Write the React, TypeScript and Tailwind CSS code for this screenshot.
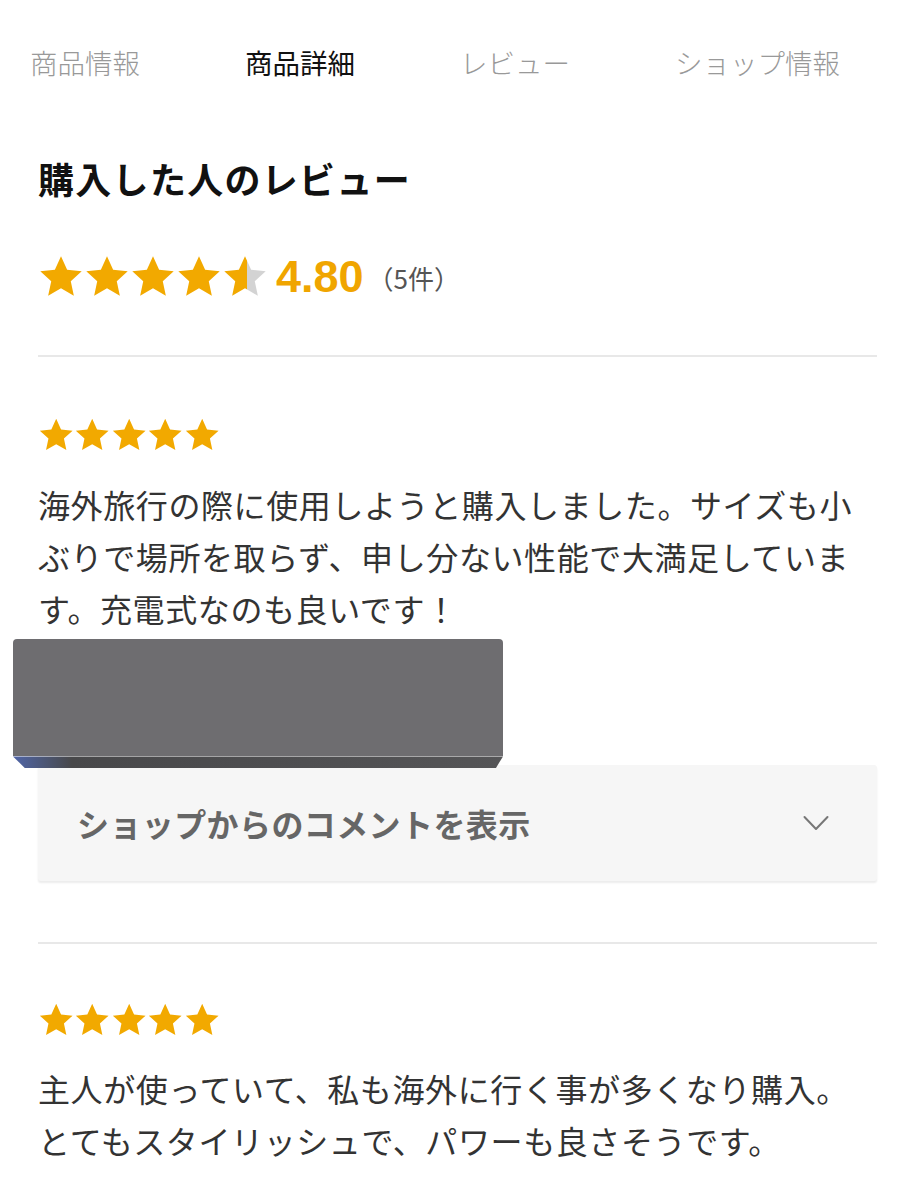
import React from "react";

const STAR = "12,1.2 15.2,8.2 22.8,9 17.1,14.2 18.7,21.8 12,17.9 5.3,21.8 6.9,14.2 1.2,9 8.8,8.2";

function Star({ size, fill = 1, id }: { size: number; fill?: number; id: string }) {
  return (
    <svg width={size} height={size} viewBox="0 0 24 24" className="block">
      <defs>
        <linearGradient id={id} x1="0" x2="1" y1="0" y2="0">
          <stop offset={fill} stopColor="#f2a900" />
          <stop offset={fill} stopColor="#d3d3d3" />
        </linearGradient>
      </defs>
      <polygon points={STAR} fill={`url(#${id})`} />
    </svg>
  );
}

function Stars({ size, rating, prefix }: { size: number; rating: number; prefix: string }) {
  return (
    <div className="flex">
      {[0, 1, 2, 3, 4].map((i) => (
        <Star key={i} size={size} id={`${prefix}${i}`} fill={Math.max(0, Math.min(1, rating - i))} />
      ))}
    </div>
  );
}

export default function App() {
  return (
    <div
      className="w-[915px] h-[1200px] bg-white overflow-hidden"
      style={{ fontFamily: '"Noto Sans CJK JP", "Noto Sans", sans-serif' }}
    >
      <nav className="flex pl-[30px] gap-[105px] pt-[44px] text-[27.5px] leading-[36px] font-light text-[#999999]">
        <span>商品情報</span>
        <span className="text-[#111111] font-normal">商品詳細</span>
        <span>レビュー</span>
        <span>ショップ情報</span>
      </nav>

      <div className="px-[38px]">
        <h2 className="mt-[76px] text-[36px] leading-[44px] font-bold text-[#111111] tracking-[1.3px]">
          購入した人のレビュー
        </h2>

        <div className="mt-[54px] flex items-center h-[46px]">
          <Stars size={46} rating={4.55} prefix="s" />
          <span
            className="ml-[8px] text-[45px] leading-[46px] font-semibold text-[#f0a500]"
            style={{ fontFamily: '"Liberation Sans", Arial, sans-serif' }}
          >
            4.80
          </span>
          <span className="ml-[4px] text-[26px] text-[#555555]">（5件）</span>
        </div>

        <div className="mt-[55px] h-[2px] bg-[#e8e8e8]" />

        <div className="mt-[60px]">
          <Stars size={36.4} rating={5} prefix="a" />
        </div>
        <p className="mt-[25px] text-[32px] leading-[52px] tracking-[0.6px] text-[#333333]">
          海外旅行の際に使用しようと購入しました。サイズも小ぶりで場所を取らず、申し分ない性能で大満足しています。充電式なのも良いです！
        </p>

        <div className="relative z-10 mt-[5px] -ml-[25px] w-[490px] h-[129px] flex flex-col">
          <div className="flex-1 bg-[#6e6d70] rounded-t-[4px]" />
          <div className="h-[12px] bg-gradient-to-r from-[#5065a8] via-[#48484a] via-[12%] to-[#555557] [clip-path:polygon(0_0,100%_0,98.5%_100%,2.5%_100%)]" />
        </div>

        <div className="-mt-[3px] h-[116px] bg-[#f6f6f6] rounded-[3px] shadow-[0_2px_2px_rgba(0,0,0,0.08)] flex items-center justify-between pl-[39px] pr-[48px]">
          <span className="text-[32px] font-bold text-[#666666] tracking-[0.4px]">ショップからのコメントを表示</span>
          <svg width="26" height="16" viewBox="0 0 26 16" fill="none">
            <path d="M1.5 2 L13 14 L24.5 2" stroke="#777777" strokeWidth="2" strokeLinecap="round" strokeLinejoin="round" />
          </svg>
        </div>

        <div className="mt-[61px] h-[2px] bg-[#e8e8e8]" />

        <div className="mt-[58px]">
          <Stars size={36.4} rating={5} prefix="b" />
        </div>
        <p className="mt-[23px] text-[32px] leading-[52px] tracking-[0.6px] text-[#333333]">
          主人が使っていて、私も海外に行く事が多くなり購入。とてもスタイリッシュで、パワーも良さそうです。
        </p>
      </div>
    </div>
  );
}
